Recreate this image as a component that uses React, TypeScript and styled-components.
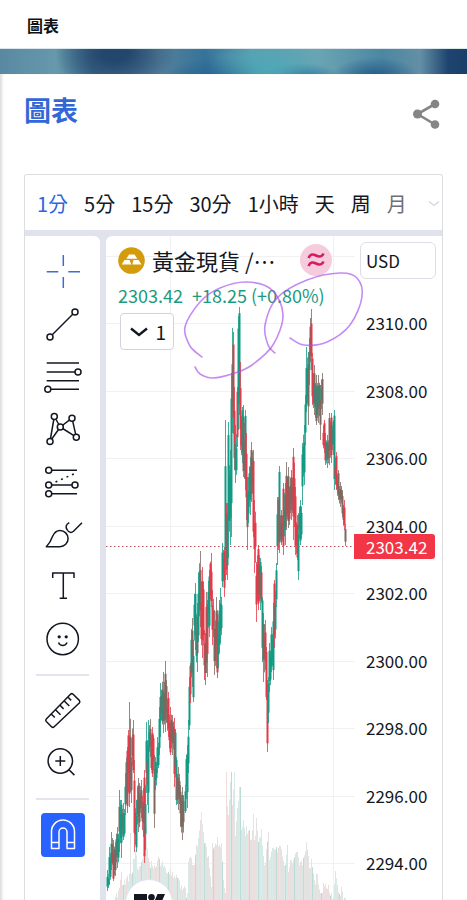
import React from "react";
import styled, { createGlobalStyle } from "styled-components";

const GlobalStyle = createGlobalStyle`
  *, *::before, *::after { box-sizing: border-box; }
  body {
    margin: 0;
    background: #fff;
    color: #131722;
    font-family: "Noto Sans CJK TC", sans-serif;
  }
  button { font: inherit; color: inherit; cursor: pointer; }
`;

const Page = styled.div`
  min-height: 100vh;
  display: flex;
  flex-direction: column;
`;

const TopBar = styled.header`
  height: 49px;
  padding: 2px 27px 0;
  display: flex;
  align-items: center;
  border-bottom: 1px solid #dbe6ea;
  font-size: 16px;
  font-weight: 700;
  color: #111;
`;

const Banner = styled.div`
  height: 25px;
  background:
    radial-gradient(ellipse 60px 26px at 268px 18px, #4fa8b6 0%, #4fa8b600 100%),
    radial-gradient(ellipse 60px 22px at 222px 30px, #24618f 0%, #24618f00 100%),
    radial-gradient(ellipse 40px 14px at 300px 28px, #246a98 0%, #246a9800 100%),
    radial-gradient(ellipse 44px 20px at 375px 28px, #235985 0%, #23598500 100%),
    radial-gradient(ellipse 60px 40px at 115px 4px, #23466c 20%, #23466c00 100%),
    linear-gradient(90deg, #5989a2 0%, #6699ac 12%, #416f8f 20%, #55809b 34%, #36739a 44%,
      #5c9eb0 54%, #6ba5b3 68%, #4c87a2 82%, #638fa5 90%, #1d4470 96%, #1a3f69 100%);
`;

const Content = styled.main`
  flex: 1;
  display: flex;
  flex-direction: column;
  padding: 0 24px;
  box-shadow: inset 3px 0 3px -1px #dcdcdc;
`;

const TitleRow = styled.div`
  height: 100px;
  padding-top: 13px;
  display: flex;
  justify-content: space-between;
  align-items: flex-start;
`;

const Title = styled.h1`
  margin: 0;
  font-size: 27px;
  line-height: 46px;
  font-weight: 700;
  color: #3367d6;
`;

const ShareButton = styled.button`
  margin-top: 10px;
  padding: 0;
  width: 34px;
  height: 34px;
  border: 0;
  background: none;
`;

const Widget = styled.section`
  flex: 1;
  display: flex;
  flex-direction: column;
  border: 1px solid #dcdde0;
  border-bottom: 0;
  border-radius: 3px 3px 0 0;
  background: #e0e3eb;
  overflow: hidden;
`;

const Intervals = styled.nav`
  height: 55px;
  padding: 2px 0 0 12px;
  margin-bottom: 6px;
  display: flex;
  align-items: center;
  gap: 16px;
  background: #fff;
`;

const IntervalButton = styled.button<{ $tone?: "active" | "faded" }>`
  flex: none;
  padding: 0;
  border: 0;
  background: none;
  font-size: 20px;
  line-height: 30px;
  color: ${(p) => (p.$tone === "active" ? "#2f66e0" : p.$tone === "faded" ? "#6c6f78" : "#131722")};
`;

const MoreButton = styled.button`
  margin: 0 2px 0 auto;
  padding: 0;
  width: 12px;
  height: 24px;
  border: 0;
  background: none;
  display: flex;
  align-items: center;
`;

const Workspace = styled.div`
  flex: 1;
  display: flex;
  gap: 6px;
`;

const Toolbar = styled.aside`
  width: 75px;
  padding-top: 10px;
  display: flex;
  flex-direction: column;
  background: #fff;
  border-top-right-radius: 6px;
`;

const ToolGroup = styled.div<{ $height: number }>`
  height: ${(p) => p.$height}px;
  display: grid;
  grid-auto-rows: 1fr;
  justify-items: center;
  align-items: center;
`;

const ToolButton = styled.button<{ $tone?: "active" | "filled" }>`
  width: 44px;
  height: 44px;
  padding: 0;
  border: 0;
  border-radius: 4px;
  display: grid;
  place-items: center;
  background: ${(p) => (p.$tone === "filled" ? "#2962ff" : "none")};
  color: ${(p) => (p.$tone === "filled" ? "#fff" : p.$tone === "active" ? "#3a6ddc" : "#131722")};
`;

const ToolDivider = styled.hr`
  width: auto;
  height: 2px;
  margin: 9px 11px;
  border: 0;
  background: #e3e5ec;
`;

const Chart = styled.div`
  position: relative;
  flex: 1;
  min-width: 0;
  height: 664px;
  display: flex;
  background: #fff;
  border-top-left-radius: 6px;
  overflow: hidden;
`;

const PlotArea = styled.div`
  flex: 1;
  min-width: 0;
  svg { display: block; width: 100%; height: 664px; }
`;

const PriceAxis = styled.div`
  position: relative;
  width: 87px;
  padding-top: 6px;
`;

const CurrencyButton = styled.button`
  display: block;
  width: 76px;
  height: 37px;
  margin-left: 5px;
  padding: 0 0 0 5px;
  border: 1px solid #dcdfe6;
  border-radius: 6px;
  background: #fff;
  font-size: 17px;
  text-align: left;
`;

const PriceList = styled.ol`
  list-style: none;
  height: 556px;
  margin: 36px 0 0;
  padding: 0 0 0 11px;
  display: flex;
  flex-direction: column;
  justify-content: space-between;
  font-size: 17px;
  line-height: 16px;
`;

const CurrentPrice = styled.output`
  position: absolute;
  top: 298px;
  left: -1px;
  width: 81px;
  height: 25px;
  padding-left: 12px;
  display: flex;
  align-items: center;
  border-radius: 0 3px 3px 0;
  background: #f23645;
  color: #fff;
  font-size: 17px;
  line-height: 16px;
`;

const Legend = styled.div`
  position: absolute;
  top: 7px;
  left: 12px;
  width: 214px;
  display: flex;
  flex-direction: column;
  align-items: flex-start;
`;

const SymbolRow = styled.div`
  width: 100%;
  height: 34px;
  display: flex;
  align-items: center;
  gap: 7px;
`;

const SymbolName = styled.h2`
  margin: 0;
  font-size: 22px;
  line-height: 34px;
  font-weight: 400;
  white-space: nowrap;
`;

const StatusBadge = styled.span`
  flex: none;
  width: 32px;
  height: 32px;
  margin-left: auto;
  border-radius: 50%;
  display: grid;
  place-items: center;
  background: #f6cbdc;
`;

const Quote = styled.p`
  margin: 5px 0 5px;
  display: flex;
  gap: 9px;
  font-size: 18px;
  line-height: 26px;
  color: #1c9a80;
  white-space: nowrap;
`;

const CollapseButton = styled.button`
  width: 54px;
  height: 37px;
  margin-left: 2px;
  padding: 0 7px 0 9px;
  display: flex;
  align-items: center;
  justify-content: space-between;
  border: 1px solid #d1d4dc;
  border-radius: 4px;
  background: #fff;
  font-size: 19px;
  line-height: 34px;
`;

const Drawing = styled.svg`
  position: absolute;
  top: 0;
  left: 0;
  pointer-events: none;
`;

const BrandLink = styled.a`
  position: absolute;
  left: 19px;
  bottom: -27px;
  width: 48px;
  height: 48px;
  border: 1px solid #e0e3eb;
  border-radius: 50%;
  background: #fff;
  display: grid;
  place-items: center;
`;

/* ---- series data: x, high, low, in chart canvas units ---- */
const CANVAS_X = 106;
const CANVAS_Y = 236;
const CANVAS_W = 249;
const CANVAS_H = 664;

const bars: [number, number, number][] = [
  [107, 870, 891], [109, 847, 885], [111, 832, 870], [113, 840, 881], [115, 842, 876], [117, 827, 868],
  [119, 790, 852], [121, 800, 858], [123, 803, 840], [125, 773, 815], [127, 747, 813], [128, 730, 792],
  [129, 702, 807], [131, 757, 803], [133, 720, 773], [134, 760, 852], [136, 800, 852], [138, 778, 832],
  [139, 783, 827], [141, 780, 818], [143, 788, 837], [144, 770, 863], [146, 722, 793], [147, 740, 805],
  [148, 720, 813], [150, 719, 757], [152, 727, 777], [154, 755, 828], [155, 757, 790], [157, 737, 773],
  [159, 707, 755], [160, 683, 737], [161, 690, 720], [163, 672, 733], [165, 661, 732], [166, 680, 723],
  [168, 692, 737], [170, 707, 755], [172, 715, 755], [174, 718, 787], [176, 757, 805], [178, 767, 810],
  [180, 785, 827], [182, 787, 840], [185, 785, 813], [187, 745, 808], [188, 720, 773], [189, 677, 730],
  [190, 663, 703], [192, 618, 687], [193, 640, 702], [195, 583, 650], [197, 603, 672], [198, 573, 642],
  [200, 551, 627], [202, 567, 658], [204, 630, 680], [205, 633, 685], [206, 592, 673], [207, 600, 677],
  [209, 570, 637], [211, 553, 607], [212, 590, 645], [214, 610, 675], [216, 597, 668], [217, 610, 678],
  [219, 600, 653], [220, 588, 643], [222, 543, 587], [224, 547, 597], [225, 420, 580], [226, 503, 575],
  [227, 503, 580], [228, 422, 558], [230, 450, 545], [231, 373, 537], [232, 328, 433], [233, 332, 434],
  [234, 387, 470], [235, 425, 483], [237, 387, 447], [238, 316, 430], [239, 307, 415], [240, 362, 450], [242, 407, 463],
  [243, 405, 477], [245, 410, 490], [246, 433, 520], [247, 477, 550], [248, 477, 523], [250, 457, 515],
  [251, 442, 502], [253, 450, 537], [254, 500, 573], [256, 562, 622], [258, 545, 610], [260, 558, 610],
  [262, 597, 662], [263, 613, 682], [265, 620, 670], [266, 647, 700], [267, 680, 752], [268, 677, 723],
  [269, 643, 692], [271, 627, 672], [273, 603, 680], [274, 580, 648], [276, 563, 607], [277, 497, 565],
  [278, 497, 550], [279, 466, 553], [281, 510, 545], [283, 483, 555], [285, 483, 545], [286, 462, 530],
  [288, 467, 528], [289, 487, 525], [291, 470, 520], [293, 448, 540], [295, 487, 555], [297, 515, 560],
  [298, 513, 580], [300, 500, 545], [302, 443, 505], [304, 425, 485], [305, 395, 445], [306, 347, 412],
  [308, 352, 425], [309, 338, 385], [310, 318, 362], [311, 309, 370], [312, 353, 405], [314, 365, 415],
  [316, 375, 425], [318, 375, 423], [320, 385, 440], [322, 373, 415], [324, 420, 453], [325, 433, 465],
  [327, 435, 468], [329, 413, 465], [331, 413, 463], [333, 420, 455], [334, 410, 490], [336, 452, 490],
  [338, 470, 500], [340, 482, 507], [342, 490, 517], [344, 500, 530], [345, 524, 546],
];

const volumes: [number, number][] = [
  [113, 900], [116, 893], [119, 888], [121, 872], [123, 885], [126, 878], [129, 874], [130, 833], [131, 874],
  [135, 850], [138, 870], [141, 862], [146, 826], [148, 858], [152, 866], [158, 857], [165, 868], [172, 872],
  [178, 878], [183, 888], [187, 893], [188, 862], [190, 857], [193, 865], [196, 845], [198, 838], [200, 820],
  [201, 812], [203, 832], [205, 843], [208, 856], [211, 887], [212, 843], [216, 845], [217, 837], [219, 845],
  [221, 843], [223, 880], [225, 893], [226, 772], [227, 806], [228, 815], [230, 782], [231, 772], [232, 805],
  [234, 772], [235, 836], [237, 808], [239, 787], [240, 787], [241, 830], [243, 820], [245, 836], [246, 826],
  [249, 830], [251, 840], [253, 814], [254, 840], [256, 818], [258, 842], [261, 829], [263, 856], [265, 862],
  [268, 832], [269, 860], [272, 848], [276, 847], [280, 846], [284, 866], [287, 845], [288, 872], [290, 860],
  [296, 852], [300, 862], [303, 858], [306, 842], [308, 856], [310, 868], [311, 859], [314, 880], [317, 874],
  [321, 893], [323, 883], [328, 885], [333, 897], [335, 871], [337, 885], [339, 894], [341, 887], [343, 896],
];

const GREEN = "#149a83";
const RED = "#e23a49";
const BROWN = "#7d6960";

const noise = (n: number) => {
  const v = Math.sin(n * 12.9898) * 43758.5453;
  return v - Math.floor(v);
};

type Candle = { x: number; high: number; low: number; open: number; close: number; color: string };

const candles: Candle[] = [];
bars.forEach(([x, high, low], i) => {
  const prev = bars[Math.max(0, i - 1)];
  const next = bars[Math.min(bars.length - 1, i + 1)];
  const slope = next[1] + next[2] - prev[1] - prev[2];
  const push = (cx: number, h: number, l: number, seed: number) => {
    const range = l - h;
    const r = noise(seed);
    let color = slope < -50 ? GREEN : slope > 50 ? RED : BROWN;
    if (r < 0.14) color = slope < 0 ? RED : GREEN;
    else if (r > 0.84) color = slope < 0 ? GREEN : RED;
    candles.push({ x: cx, high: h, low: l, open: h + range * (0.05 + r * 0.3), close: l - range * (0.05 + noise(cx) * 0.28), color });
  };
  push(x, high, low, x * 3);
  if (next[0] - x > 1) {
    const near = noise(x + 7) > 0.5 ? next : bars[i];
    const range = near[2] - near[1];
    push(x + 1, near[1] + range * 0.16, near[2] - range * 0.14, x * 5);
  }
});

const volumeBars = Array.from({ length: 233 }, (_, i) => {
  const x = 113 + i;
  let k = volumes.findIndex((v) => v[0] > x);
  if (k < 1) k = volumes.length - 1;
  const [x0, y0] = volumes[k - 1];
  const [x1, y1] = volumes[k];
  const t = Math.min(1, (x - x0) / (x1 - x0));
  const base = x === x0 ? y0 : y0 + (y1 - y0) * t + (noise(x) - 0.3) * 10;
  const r = noise(x * 1.7);
  const color = x % 9 === 6 ? "#bcdcd8" : r < 0.24 ? "#d8ebe9" : r > 0.8 ? "#f0dcdd" : "#e4e3e1";
  return { x, y: Math.min(900, base), color };
});

const smoothPath = (pts: [number, number][]) =>
  pts.slice(1).reduce((d, p, i) => {
    const a = pts[Math.max(0, i - 1)];
    const b = pts[i];
    const c = pts[Math.min(pts.length - 1, i + 2)];
    return `${d}C${b[0] + (p[0] - a[0]) / 6} ${b[1] + (p[1] - a[1]) / 6} ${p[0] - (c[0] - b[0]) / 6} ${p[1] - (c[1] - b[1]) / 6} ${p[0]} ${p[1]}`;
  }, `M${pts[0][0]} ${pts[0][1]}`);

const leftLoop: [number, number][] = [
  [202, 357], [190, 346], [185, 327], [200, 302], [220, 288], [247, 282], [272, 290], [283, 315], [273, 345],
  [252, 365], [235, 373], [213, 378], [200, 374], [195, 367],
];
const rightLoop: [number, number][] = [
  [290, 338], [304, 345], [327, 342], [350, 325], [362, 297], [357, 278], [340, 273], [307, 280], [277, 298],
  [265, 325], [268, 345], [275, 353],
];

const gridRows = [257, 324, 392, 459, 527, 594, 662, 729, 797, 864];

function Plot() {
  return (
    <svg viewBox={`${CANVAS_X} ${CANVAS_Y} ${CANVAS_W} ${CANVAS_H}`} preserveAspectRatio="none" role="img" aria-label="黃金現貨">
      <g fill="#f1f1f2">
        {gridRows.map((y) => (
          <rect key={y} x={106} y={y - 1} width={249} height={1} />
        ))}
        <rect x={170} y={236} width={1} height={664} />
        <rect x={333} y={236} width={1} height={664} />
      </g>
      {volumeBars.map((v) => (
        <rect key={v.x} x={v.x} y={v.y} width={1} height={900 - v.y} fill={v.color} />
      ))}
      <path d="M106 546.5H355" stroke="#b8505c" strokeDasharray="1.5 2.5" />
      {candles.map((c) => (
        <g key={c.x} fill={c.color}>
          <rect x={c.x} y={c.high} width={1} height={c.low - c.high} opacity={0.8} />
          <rect x={c.x - 0.5} y={c.open} width={2} height={Math.max(1, c.close - c.open)} />
        </g>
      ))}
    </svg>
  );
}

const dot = (x: number, y: number) => <circle key={`${x}-${y}`} cx={x} cy={y} r={3} fill="#fff" />;

const icons = {
  cross: <path d="M18.3 1v11M18.3 23v11M1.7 17.7h11.6M23.3 17.7H35" />,
  line: <><path d="M5 30 30 5" />{dot(5, 30)}{dot(30, 5)}</>,
  fib: <><path d="M1.7 4H34M1.7 13H34M1.7 21.7H34M1.7 30.3H34" />{dot(33, 13)}{dot(2.8, 30.3)}</>,
  pattern: (
    <>
      <path d="M5 30.5 9.3 5.5l6 10.5L27 7.2l4.3 19L15.3 16 5 30.5" />
      {dot(9.3, 5.5)}{dot(27, 7.2)}{dot(15.3, 16)}{dot(31.3, 26.2)}{dot(5, 30.5)}
    </>
  ),
  forecast: (
    <>
      <path d="M3.7 6.3H32M3.7 21H30M3.7 29.7H32" />
      <path d="M10.5 18 31 9" strokeDasharray="2 4" />
      {dot(3.7, 6.3)}{dot(3.7, 21)}{dot(30, 21)}{dot(3.7, 29.7)}
    </>
  ),
  brush: (
    <>
      <path d="M1.3 30.7C5 27 6.3 24 7.5 20.5 9.5 16 12 14.5 15 14.5a8.1 8.1 0 0 1 0 16.2Z" />
      <path d="M24.3 6.7c-3.3 2-4 4-2.3 6.8 2 3.5 4.5 3.5 6.5 1.7L37 6.7" />
    </>
  ),
  text: <path d="M7.7 10V5h21.3v5M18.3 5v25.2M14.7 30.2H22" />,
  smile: (
    <>
      <circle cx={17.7} cy={18} r={15.7} />
      <path d="M13.500 21.500c1.500 4 7 4 8.500 0" />
      <circle cx={14.2} cy={15.8} r={0.9} fill="currentColor" />
      <circle cx={21.2} cy={15.8} r={0.9} fill="currentColor" />
    </>
  ),
  ruler: (
    <path d="M25.500 1.200q1.300-1.200 2.600 0l6.200 6.200q1.200 1.300 0 2.600L9.200 33.700q-1.400 1.300-2.700 0L1.300 28.500q-1.200-1.300 0-2.600ZM6.200 21l3.600 3.500M10.500 16.800l5 5M15 12.300l3.600 3.600M19.300 8l5 5M23 4.200l3.200 3.200" />
  ),
  zoom: <><circle cx={15.3} cy={16} r={12.2} /><path d="M10.3 16h10M15.3 11v10M24 24.7l5.4 5.4" /></>,
  magnet: (
    <path d="M6.500 31.500V14.500a11.500 11.500 0 0 1 23 0v17h-7.500V15a4 4 0 0 0-8 0v16.500ZM6.500 25.500H14M22 25.500h7.500" />
  ),
};

type IconName = keyof typeof icons;

function Tool({ name, label, tone }: { name: IconName; label: string; tone?: "active" | "filled" }) {
  return (
    <ToolButton $tone={tone} aria-label={label}>
      <svg width="36" height="36" viewBox="0 0 36 36" overflow="visible" fill="none" stroke="currentColor" strokeWidth="1.5" strokeLinejoin="round">
        {icons[name]}
      </svg>
    </ToolButton>
  );
}

const drawingTools: { name: IconName; label: string; tone?: "active" }[] = [
  { name: "cross", label: "十字線", tone: "active" },
  { name: "line", label: "趨勢線" },
  { name: "fib", label: "斐波那契" },
  { name: "pattern", label: "形態" },
  { name: "forecast", label: "預測" },
  { name: "brush", label: "筆刷" },
  { name: "text", label: "文字" },
  { name: "smile", label: "表情" },
];

const intervals: { label: string; tone?: "active" | "faded" }[] = [
  { label: "1分", tone: "active" },
  { label: "5分" },
  { label: "15分" },
  { label: "30分" },
  { label: "1小時" },
  { label: "天" },
  { label: "周" },
  { label: "月", tone: "faded" },
];

const prices = ["2310.00", "2308.00", "2306.00", "2304.00", "2302.00", "2300.00", "2298.00", "2296.00", "2294.00"];

export default function App() {
  return (
    <Page>
      <GlobalStyle />
      <TopBar>圖表</TopBar>
      <Banner />
      <Content>
        <TitleRow>
          <Title>圖表</Title>
          <ShareButton aria-label="分享">
            <svg width="34" height="34" viewBox="0 0 34 34" fill="#858585">
              <path d="M26 7 8.500 17 26 27.500" fill="none" stroke="#858585" strokeWidth="2.6" />
              <circle cx="26" cy="7" r="4.3" />
              <circle cx="8.5" cy="17" r="4.5" />
              <circle cx="26" cy="27.5" r="4.3" />
            </svg>
          </ShareButton>
        </TitleRow>
        <Widget>
          <Intervals>
            {intervals.map((item) => (
              <IntervalButton key={item.label} $tone={item.tone}>{item.label}</IntervalButton>
            ))}
            <MoreButton aria-label="更多">
              <svg width="12" height="8" viewBox="0 0 12 8" fill="none" stroke="#d5d7dc" strokeWidth="1.3">
                <path d="m1 1.500 5 4 5-4" />
              </svg>
            </MoreButton>
          </Intervals>
          <Workspace>
            <Toolbar>
              <ToolGroup $height={419}>
                {drawingTools.map((tool) => <Tool key={tool.name} {...tool} />)}
              </ToolGroup>
              <ToolDivider />
              <ToolGroup $height={104}>
                <Tool name="ruler" label="測量" />
                <Tool name="zoom" label="放大" />
              </ToolGroup>
              <ToolDivider />
              <ToolGroup $height={52}>
                <Tool name="magnet" label="磁鐵模式" tone="filled" />
              </ToolGroup>
            </Toolbar>
            <Chart>
              <PlotArea><Plot /></PlotArea>
              <PriceAxis>
                <CurrencyButton>USD</CurrencyButton>
                <PriceList>
                  {prices.map((p) => <li key={p}>{p}</li>)}
                </PriceList>
                <CurrentPrice>2303.42</CurrentPrice>
              </PriceAxis>
              <Legend>
                <SymbolRow>
                  <svg width="27" height="27" viewBox="0 0 27 27" fill="#fff">
                    <circle cx="13.5" cy="13.5" r="13.3" fill="#d49b0b" />
                    <path d="M11 7.500h5.500l2.800 4.200h-11ZM6.500 13h5l1.800 4.500H3.700ZM15.500 13h5l3 4.500h-9.200Z" />
                  </svg>
                  <SymbolName>黃金現貨 /…</SymbolName>
                  <StatusBadge>
                    <svg width="18" height="16" viewBox="0 0 18 16" fill="none" stroke="#d81b60" strokeWidth="2.6">
                      <path d="M1.500 6C3.500 1.500 6 2 9 3.500s5.500 2 7.500-2M1.500 14c2-4.500 4.500-4 7.500-2.500s5.500 2 7.500-2" />
                    </svg>
                  </StatusBadge>
                </SymbolRow>
                <Quote><span>2303.42</span><span>+18.25 (+0.80%)</span></Quote>
                <CollapseButton aria-expanded={false}>
                  <svg width="18" height="10" viewBox="0 0 18 10" fill="none" stroke="#131722" strokeWidth="2.4">
                    <path d="m1 1.500 8 6.500 8-6.500" />
                  </svg>
                  1
                </CollapseButton>
              </Legend>
              <Drawing width="262" height="160" viewBox="106 236 262 160" fill="none" stroke="#a64df0" strokeOpacity="0.65" strokeWidth="1.6" strokeLinecap="round">
                <path d={smoothPath(leftLoop)} />
                <path d={smoothPath(rightLoop)} />
              </Drawing>
              <BrandLink href="#" aria-label="TradingView">
                <svg width="32" height="18" viewBox="0 0 32 18" fill="#131722">
                  <path d="M1 0h13v17H7.500V6.500H1ZM24.500 0H32l-7.200 17h-7.500Z" />
                  <circle cx="18.5" cy="3.3" r="3.3" />
                </svg>
              </BrandLink>
            </Chart>
          </Workspace>
        </Widget>
      </Content>
    </Page>
  );
}
